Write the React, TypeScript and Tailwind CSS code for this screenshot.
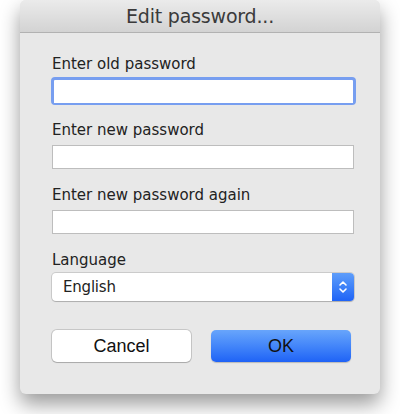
import { useState } from "react";

const LABEL = "block text-[15px] leading-[20px] text-[#222] font-['DejaVu_Sans',sans-serif]";
const INPUT =
  "block w-[302px] h-[24px] bg-white border border-[#bdbdbd] outline-none px-1 text-[13px]";

function App() {
  const [oldPw, setOldPw] = useState("");
  const [newPw, setNewPw] = useState("");
  const [again, setAgain] = useState("");

  return (
    <div className="w-[400px] h-[414px] bg-white relative">
      <div className="ml-[20px] w-[360px] h-[394px] rounded-[6px] bg-[#e8e8e8] shadow-[0_10px_20px_rgba(0,0,0,0.4)] flex flex-col overflow-hidden">
        {/* title bar */}
        <div className="h-[33px] shrink-0 bg-gradient-to-b from-[#ebebeb] to-[#d3d3d3] border-b border-[#b2b2b2] flex items-center justify-center">
          <span className="text-[19px] text-[#3a3a3a] font-['DejaVu_Sans',sans-serif] tracking-[-0.2px]">
            Edit password...
          </span>
        </div>

        {/* body */}
        <div className="flex flex-col pl-[32px] pt-[21px]">
          <label className={LABEL}>Enter old password</label>
          <div className="mt-[3px] -ml-[1px] w-[305px] h-[28px] rounded-[4px] border-[3px] border-[#779ef0] bg-white">
            <input
              type="password"
              value={oldPw}
              onChange={(e) => setOldPw(e.target.value)}
              className="w-full h-full outline-none px-1 bg-white"
            />
          </div>

          <label className={`${LABEL} mt-[15px]`}>Enter new password</label>
          <input
            type="password"
            value={newPw}
            onChange={(e) => setNewPw(e.target.value)}
            className={`${INPUT} mt-[5px]`}
          />

          <label className={`${LABEL} mt-[16px]`}>Enter new password again</label>
          <input
            type="password"
            value={again}
            onChange={(e) => setAgain(e.target.value)}
            className={`${INPUT} mt-[5px]`}
          />

          <label className={`${LABEL} mt-[16px]`}>Language</label>
          <div className="mt-[3px] w-[302px] h-[28px] flex rounded-[4px] bg-white shadow-[0_0_0_1px_rgba(0,0,0,0.12),0_1px_1px_rgba(0,0,0,0.15)]">
            <span className="flex-1 pl-[11px] flex items-center text-[15px] text-[#222] font-['DejaVu_Sans',sans-serif] tracking-[-0.2px]">
              English
            </span>
            <div className="w-[22px] h-full rounded-r-[4px] bg-gradient-to-b from-[#5e9dfa] to-[#1f63f6] flex items-center justify-center">
              <svg width="10" height="16" viewBox="0 0 10 16" fill="none" stroke="white" strokeWidth="1.6" strokeLinecap="round" strokeLinejoin="round">
                <path d="M2 6 L5 3 L8 6" />
                <path d="M2 10 L5 13 L8 10" />
              </svg>
            </div>
          </div>

          <div className="mt-[29px] flex gap-[20px]">
            <button className="w-[139px] h-[32px] rounded-[5px] bg-white shadow-[0_0_0_1px_rgba(0,0,0,0.14),0_1px_1px_rgba(0,0,0,0.15)] text-[18px] text-[#111] font-['Liberation_Sans',sans-serif]">
              Cancel
            </button>
            <button className="w-[140px] h-[32px] rounded-[5px] bg-gradient-to-b from-[#68a5fb] to-[#1f62f6] shadow-[0_1px_1px_rgba(0,0,0,0.2)] text-[18px] text-[#111] font-['Liberation_Sans',sans-serif]">
              OK
            </button>
          </div>
        </div>
      </div>
    </div>
  );
}

export default App;
